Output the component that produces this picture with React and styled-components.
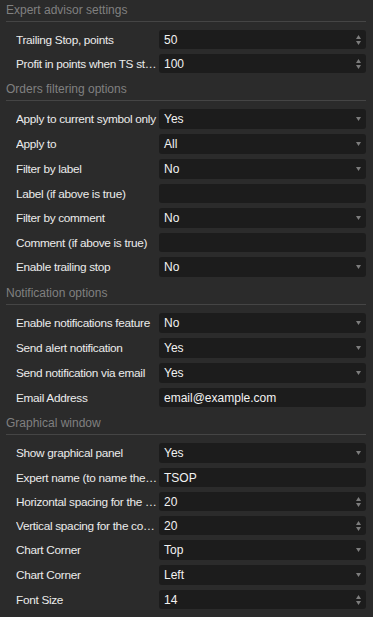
import styled, { createGlobalStyle } from "styled-components";

const GlobalStyle = createGlobalStyle`
  html, body {
    margin: 0;
    padding: 0;
    background: #2b2b2b;
  }

  body {
    font-family: "Liberation Sans", Arial, sans-serif;
    font-size: 12px;
    color: #e8e8e8;
  }
`;

const Panel = styled.div`
  padding: 0 7px 8px 6px;
`;

const SectionTitle = styled.div`
  height: 21px;
  line-height: 21px;
  color: #808080;
  border-bottom: 1px solid #454545;
`;

const Rows = styled.div`
  display: flex;
  flex-direction: column;
  gap: 5px;
  padding: 8px 0 6px 10px;
`;

const Row = styled.div`
  display: grid;
  grid-template-columns: 143px 1fr;
  align-items: center;
`;

const Label = styled.div`
  padding-right: 2px;
  white-space: nowrap;
  overflow: hidden;
  text-overflow: ellipsis;
  font-size: 11.8px;
  letter-spacing: -0.3px;
  color: #ececec;
`;

const Control = styled.div`
  display: flex;
  align-items: center;
  justify-content: space-between;
  height: ${(p) => (p.$kind === "select" ? 20 : 19)}px;
  padding: 0 5px;
  background: #1c1c1c;
  border-radius: 3px;
  color: #f2f2f2;
`;

const Arrows = styled.div`
  display: flex;
  flex-direction: column;
  gap: 2px;
  color: #7d7d7d;

  svg {
    display: block;
  }
`;

const fields = [
  {
    title: "Expert advisor settings",
    rows: [
      ["Trailing Stop, points", "number", "50"],
      ["Profit in points when TS starts", "number", "100"],
    ],
  },
  {
    title: "Orders filtering options",
    rows: [
      ["Apply to current symbol only", "select", "Yes"],
      ["Apply to", "select", "All"],
      ["Filter by label", "select", "No"],
      ["Label (if above is true)", "text", ""],
      ["Filter by comment", "select", "No"],
      ["Comment (if above is true)", "text", ""],
      ["Enable trailing stop", "select", "No"],
    ],
  },
  {
    title: "Notification options",
    rows: [
      ["Enable notifications feature", "select", "No"],
      ["Send alert notification", "select", "Yes"],
      ["Send notification via email", "select", "Yes"],
      ["Email Address", "text", "email@example.com"],
    ],
  },
  {
    title: "Graphical window",
    rows: [
      ["Show graphical panel", "select", "Yes"],
      ["Expert name (to name the objects)", "text", "TSOP"],
      ["Horizontal spacing for the panel", "number", "20"],
      ["Vertical spacing for the columns", "number", "20"],
      ["Chart Corner", "select", "Top"],
      ["Chart Corner", "select", "Left"],
      ["Font Size", "number", "14"],
    ],
  },
];

function Down() {
  return (
    <svg width="5" height="4" viewBox="0 0 5 4">
      <path d="M0 0H5L2.5 4Z" fill="currentColor" />
    </svg>
  );
}

function Up() {
  return (
    <svg width="5" height="4" viewBox="0 0 5 4">
      <path d="M0 4H5L2.5 0Z" fill="currentColor" />
    </svg>
  );
}

function Field({ kind, value }) {
  return (
    <Control $kind={kind}>
      <span>{value}</span>
      {kind === "select" && (
        <Arrows>
          <Down />
        </Arrows>
      )}
      {kind === "number" && (
        <Arrows>
          <Up />
          <Down />
        </Arrows>
      )}
    </Control>
  );
}

export default function App() {
  return (
    <>
      <GlobalStyle />
      <Panel>
        {fields.map((section) => (
          <section key={section.title}>
            <SectionTitle>{section.title}</SectionTitle>
            <Rows>
              {section.rows.map(([label, kind, value], i) => (
                <Row key={i}>
                  <Label>{label}</Label>
                  <Field kind={kind} value={value} />
                </Row>
              ))}
            </Rows>
          </section>
        ))}
      </Panel>
    </>
  );
}
